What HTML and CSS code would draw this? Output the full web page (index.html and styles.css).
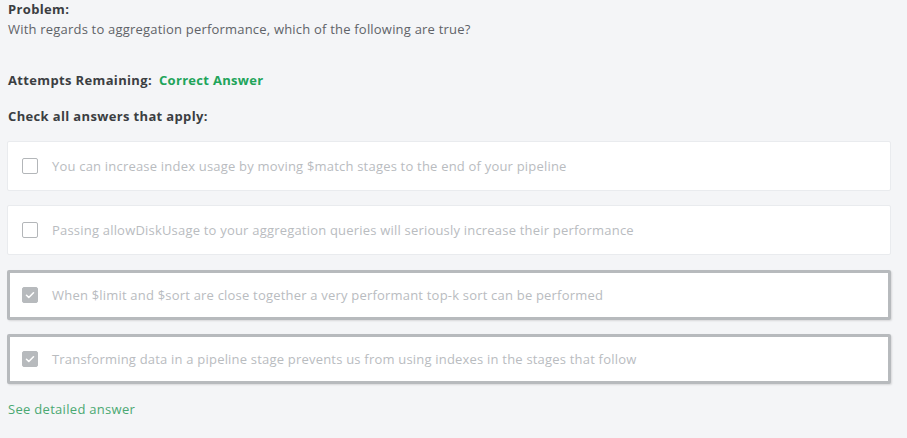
FILE: index.html
```html
<!DOCTYPE html>
<html>
<head>
<meta charset="utf-8">
<link rel="stylesheet" href="styles.css">
</head>
<body>
<div class="page">
  <div class="label">Problem:</div>
  <div class="question">With regards to aggregation performance, which of the following are true?</div>
  <div class="attempts"><span class="label">Attempts Remaining:</span><span class="correct">Correct Answer</span></div>
  <div class="label check-all">Check all answers that apply:</div>
  <div class="options">
    <div class="option">
      <span class="box"></span>
      <span class="opt-text">You can increase index usage by moving $match stages to the end of your pipeline</span>
    </div>
    <div class="option">
      <span class="box"></span>
      <span class="opt-text">Passing allowDiskUsage to your aggregation queries will seriously increase their performance</span>
    </div>
    <div class="option selected first-selected">
      <span class="box checked"><svg viewBox="0 0 16 16" width="16" height="16"><path d="M4 8.3l2.6 2.5L12 5.4" fill="none" stroke="#fff" stroke-width="1.8" stroke-linecap="round" stroke-linejoin="round"/></svg></span>
      <span class="opt-text">When $limit and $sort are close together a very performant top-k sort can be performed</span>
    </div>
    <div class="option selected">
      <span class="box checked"><svg viewBox="0 0 16 16" width="16" height="16"><path d="M4 8.3l2.6 2.5L12 5.4" fill="none" stroke="#fff" stroke-width="1.8" stroke-linecap="round" stroke-linejoin="round"/></svg></span>
      <span class="opt-text">Transforming data in a pipeline stage prevents us from using indexes in the stages that follow</span>
    </div>
  </div>
  <a class="detail">See detailed answer</a>
</div>
</body>
</html>
```
FILE: styles.css
```css
html, body {
  margin: 0;
  padding: 0;
  background: #f4f5f7;
}
.page {
  padding: 1px 16px 0 8px;
  font-family: "Open Sans", "Liberation Sans", sans-serif;
  font-size: 13px;
  color: #5f6368;
  letter-spacing: 0.2px;
  display: flex;
  flex-direction: column;
}
.label {
  font-weight: 700;
  color: #3b3e42;
  font-size: 13px;
  line-height: 17px;
  letter-spacing: 0.35px;
}
.question {
  line-height: 20px;
  margin-top: 1px;
}
.attempts {
  margin-top: 33px;
  display: flex;
  gap: 7px;
  line-height: 17px;
}
.correct {
  font-weight: 700;
  color: #21a45a;
  letter-spacing: 0.3px;
}
.check-all {
  margin-top: 19px;
}
.options {
  margin-top: 16px;
  display: flex;
  flex-direction: column;
  gap: 14px;
  margin-left: -1px;
}
.option {
  height: 50px;
  box-sizing: border-box;
  background: #fff;
  border: 1px solid #e9ebee;
  border-radius: 2px;
  display: flex;
  align-items: center;
  padding-left: 14px;
  gap: 14px;
}
.option.selected {
  border: 3px solid #b7babd;
  padding-left: 12px;
  box-shadow: 1px 1px 2px rgba(0,0,0,0.12);
}
.option.first-selected {
  margin-top: 1px;
}
.box {
  width: 14px;
  height: 14px;
  border: 1.5px solid #b3b6b9;
  border-radius: 2px;
  flex: none;
  display: flex;
  align-items: center;
  justify-content: center;
}
.box.checked {
  background: #b7babd;
  border-color: #b7babd;
}
.box svg {
  width: 14px;
  height: 14px;
}
.opt-text {
  color: #b9bcbf;
  font-size: 13px;
  letter-spacing: 0.2px;
}
.detail {
  margin-top: 17px;
  color: #4aa872;
  font-size: 13px;
  line-height: 17px;
  letter-spacing: 0.3px;
}
```
